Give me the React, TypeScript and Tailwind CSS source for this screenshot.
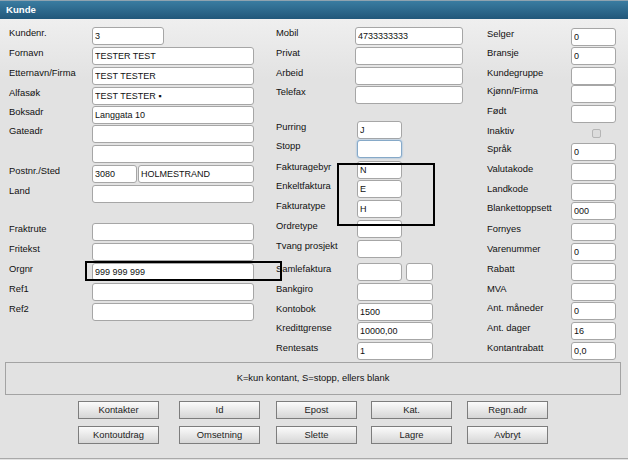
import React from "react";

type Inp = { w: string; v?: string; focus?: boolean };
type Row = { l?: string; h: string; ins?: Inp[]; ml?: boolean; check?: boolean; gap?: string };

const leftRows: Row[] = [
  { l: "Kundenr.", h: "h-[20px]", ins: [{ w: "w-[72px]", v: "3" }] },
  { l: "Fornavn", h: "h-[20px]", ins: [{ w: "w-[162px]", v: "TESTER TEST" }] },
  { l: "Etternavn/Firma", h: "h-[20px]", ins: [{ w: "w-[162px]", v: "TEST TESTER" }] },
  { l: "Alfasøk", h: "h-[19px]", ins: [{ w: "w-[162px]", v: "TEST TESTER ▪" }] },
  { l: "Boksadr", h: "h-[19px]", ins: [{ w: "w-[162px]", v: "Langgata 10" }] },
  { l: "Gateadr", h: "h-[20px]", ins: [{ w: "w-[162px]" }] },
  { h: "h-[20px]", ins: [{ w: "w-[162px]" }] },
  { l: "Postnr./Sted", h: "h-[20px]", gap: "gap-[1px]", ins: [{ w: "w-[45px]", v: "3080" }, { w: "w-[116px]", v: "HOLMESTRAND" }] },
  { l: "Land", h: "h-[19px]", ins: [{ w: "w-[162px]" }] },
  { h: "h-[19px]" },
  { l: "Fraktrute", h: "h-[20px]", ins: [{ w: "w-[162px]" }] },
  { l: "Fritekst", h: "h-[20px]", ins: [{ w: "w-[162px]" }] },
  { l: "Orgnr", h: "h-[20px]", ins: [{ w: "w-[162px]", v: "999 999 999" }] },
  { l: "Ref1", h: "h-[20px]", ins: [{ w: "w-[162px]" }] },
  { l: "Ref2", h: "h-[20px]", ins: [{ w: "w-[162px]" }] },
];

const midRows: Row[] = [
  { l: "Mobil", h: "h-[20px]", ins: [{ w: "w-[108px]", v: "4733333333" }] },
  { l: "Privat", h: "h-[20px]", ins: [{ w: "w-[108px]" }] },
  { l: "Arbeid", h: "h-[19px]", ins: [{ w: "w-[108px]" }] },
  { l: "Telefax", h: "h-[19px]", ins: [{ w: "w-[108px]" }] },
  { h: "h-[16px]" },
  { l: "Purring", h: "h-[19px]", ml: true, ins: [{ w: "w-[45px]", v: "J" }] },
  { l: "Stopp", h: "h-[21px]", ml: true, ins: [{ w: "w-[45px]", focus: true }] },
  { l: "Fakturagebyr", h: "h-[19px]", ml: true, ins: [{ w: "w-[45px]", v: "N" }] },
  { l: "Enkeltfaktura", h: "h-[20px]", ml: true, ins: [{ w: "w-[45px]", v: "E" }] },
  { l: "Fakturatype", h: "h-[20px]", ml: true, ins: [{ w: "w-[45px]", v: "H" }] },
  { l: "Ordretype", h: "h-[20px]", ml: true, ins: [{ w: "w-[45px]" }] },
  { l: "Tvang prosjekt", h: "h-[23px]", ml: true, ins: [{ w: "w-[45px]" }] },
  { l: "Samlefaktura", h: "h-[20px]", ml: true, gap: "gap-[4px]", ins: [{ w: "w-[45px]" }, { w: "w-[27px]" }] },
  { l: "Bankgiro", h: "h-[20px]", ml: true, ins: [{ w: "w-[76px]" }] },
  { l: "Kontobok", h: "h-[19px]", ml: true, ins: [{ w: "w-[76px]", v: "1500" }] },
  { l: "Kredittgrense", h: "h-[20px]", ml: true, ins: [{ w: "w-[76px]", v: "10000,00" }] },
  { l: "Rentesats", h: "h-[20px]", ml: true, ins: [{ w: "w-[76px]", v: "1" }] },
];

const rightRows: Row[] = [
  { l: "Selger", h: "h-[19px]", ins: [{ w: "w-[45px]", v: "0" }] },
  { l: "Bransje", h: "h-[20px]", ins: [{ w: "w-[45px]", v: "0" }] },
  { l: "Kundegruppe", h: "h-[18px]", ins: [{ w: "w-[45px]" }] },
  { l: "Kjønn/Firma", h: "h-[20px]", ins: [{ w: "w-[45px]" }] },
  { l: "Født", h: "h-[20px]", ins: [{ w: "w-[45px]" }] },
  { l: "Inaktiv", h: "h-[18px]", check: true },
  { l: "Språk", h: "h-[20px]", ins: [{ w: "w-[45px]", v: "0" }] },
  { l: "Valutakode", h: "h-[20px]", ins: [{ w: "w-[45px]" }] },
  { l: "Landkode", h: "h-[19px]", ins: [{ w: "w-[45px]" }] },
  { l: "Blankettoppsett", h: "h-[21px]", ins: [{ w: "w-[45px]", v: "000" }] },
  { l: "Fornyes", h: "h-[20px]", ins: [{ w: "w-[45px]" }] },
  { l: "Varenummer", h: "h-[20px]", ins: [{ w: "w-[45px]", v: "0" }] },
  { l: "Rabatt", h: "h-[20px]", ins: [{ w: "w-[45px]" }] },
  { l: "MVA", h: "h-[19px]", ins: [{ w: "w-[45px]" }] },
  { l: "Ant. måneder", h: "h-[20px]", ins: [{ w: "w-[45px]", v: "0" }] },
  { l: "Ant. dager", h: "h-[20px]", ins: [{ w: "w-[45px]", v: "16" }] },
  { l: "Kontantrabatt", h: "h-[20px]", ins: [{ w: "w-[45px]", v: "0,0" }] },
];

const buttons = [
  ["Kontakter", "Id", "Epost", "Kat.", "Regn.adr"],
  ["Kontoutdrag", "Omsetning", "Slette", "Lagre", "Avbryt"],
];

function Field({ row, labelW }: { row: Row; labelW: string }) {
  return (
    <div className={`flex items-start ${row.h}`}>
      <span className={`${labelW} shrink-0 pt-[1px] text-[9.4px] leading-[12px] text-[#111]`}>{row.l}</span>
      {row.check && (
        <span className="ml-[21px] mt-[5px] h-[9px] w-[9px] rounded-[2px] border border-[#b5b5b5] bg-[#dcdcdc]" />
      )}
      {row.ins && (
        <div className={`flex ${row.gap ?? ""} ${row.ml ? "ml-[2px]" : ""}`}>
          {row.ins.map((i, k) => (
            <input
              key={k}
              readOnly
              defaultValue={i.v ?? ""}
              className={`${i.w} mt-[1px] h-[18px] rounded-[3px] border bg-white px-[2px] text-[9px] text-[#111] outline-none ${
                i.focus ? "border-[#86a9c8] shadow-[0_0_2px_#79aee0]" : "border-[#a6a6a6]"
              }`}
            />
          ))}
        </div>
      )}
    </div>
  );
}

export default function App() {
  return (
    <div className="relative h-[460px] w-[628px] bg-[#e2e2e2] font-['Liberation_Sans',Arial,sans-serif]">
      <div className="flex h-[459px] flex-col border-b border-[#a9a9a9]">
        {/* Header */}
        <div className="flex h-[19px] items-center border-t border-[#8fa3b0] bg-[linear-gradient(to_bottom,#3a7ca1,#21577a)] pl-[6px]">
          <span className="text-[9.6px] font-bold text-white">Kunde</span>
        </div>

        <div className="flex-1 bg-[linear-gradient(to_bottom,#efefef,#e2e2e2_60px)] pt-[7px]">
          {/* Form columns */}
          <div className="flex pl-[9px]">
            <div className="flex w-[267px] flex-col">
              {leftRows.map((r, i) => (
                <Field key={i} row={r} labelW="w-[83px]" />
              ))}
            </div>
            <div className="flex w-[211px] flex-col">
              {midRows.map((r, i) => (
                <Field key={i} row={r} labelW="w-[79px]" />
              ))}
            </div>
            <div className="mt-[1px] flex flex-col">
              {rightRows.map((r, i) => (
                <Field key={i} row={r} labelW="w-[84px]" />
              ))}
            </div>
          </div>

          {/* Info box */}
          <div className="mx-[5px] mt-[1px] flex h-[33px] w-[616px] items-center justify-center border border-[#a3a3a3] text-[9.4px] text-[#111]">
            K=kun kontant, S=stopp, ellers blank
          </div>

          {/* Buttons */}
          <div className="mt-[6px] grid grid-cols-[101px_97px_95px_96px_81px] gap-y-[7px] pl-[78px]">
            {buttons.flat().map((b) => (
              <button
                key={b}
                className="h-[18px] w-[81px] border border-[#7d7d7d] bg-[linear-gradient(to_bottom,#fbfbfb,#d6d6d6)] text-[9.4px] leading-none text-[#222]"
              >
                {b}
              </button>
            ))}
          </div>
        </div>
      </div>

      {/* Annotation frames */}
      <div className="pointer-events-none absolute left-[337px] top-[163px] h-[63px] w-[98px] border-2 border-black" />
      <div className="pointer-events-none absolute left-[85px] top-[261px] h-[20px] w-[197px] border-2 border-black" />
    </div>
  );
}
